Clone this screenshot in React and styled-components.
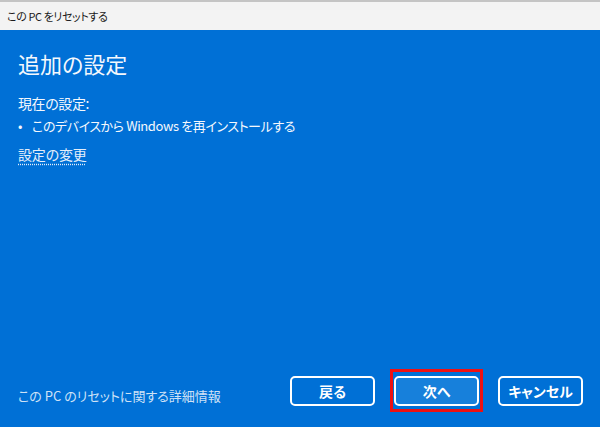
import React from 'react'
import styled, { createGlobalStyle } from 'styled-components'

const GlobalStyle = createGlobalStyle`
  html, body, #root {
    margin: 0;
    height: 100%;
  }
  body {
    font-family: "Noto Sans CJK JP", "Noto Sans", sans-serif;
    font-feature-settings: "palt";
    -webkit-font-smoothing: antialiased;
  }
`

const ResetWindow = () => {
  return (
    <>
      <GlobalStyle />
      <Window>
        <TitleBar>この PC をリセットする</TitleBar>
        <Body>
          <Content>
            <Heading>追加の設定</Heading>
            <SubHeading>現在の設定:</SubHeading>
            <SettingItem>このデバイスから Windows を再インストールする</SettingItem>
            <ChangeLink>設定の変更</ChangeLink>
          </Content>
          <Footer>
            <InfoLink>この PC のリセットに関する詳細情報</InfoLink>
            <Buttons>
              <ActionButton>戻る</ActionButton>
              <ActionButton $primary>次へ</ActionButton>
              <ActionButton>キャンセル</ActionButton>
            </Buttons>
          </Footer>
        </Body>
      </Window>
    </>
  )
}

const Window = styled.div`
  display: flex;
  flex-direction: column;
  width: 600px;
  height: 427px;
  overflow: hidden;
`

const TitleBar = styled.div`
  height: 28px;
  display: flex;
  align-items: center;
  padding: 0 7px;
  border-top: 2px solid #c4c4c4;
  background: #f3f3f3;
  color: #1a1a1a;
  font-size: 11px;
  letter-spacing: -0.4px;
`

const Body = styled.div`
  flex: 1;
  display: flex;
  flex-direction: column;
  justify-content: space-between;
  background: #0070d6;
  color: #f4f8fd;
  padding: 17px 17px 21px 18px;
`

const Content = styled.div`
  display: flex;
  flex-direction: column;
  align-items: flex-start;
`

const Heading = styled.h1`
  margin: 0;
  font-size: 22px;
  font-weight: 400;
  line-height: 32px;
`

const SubHeading = styled.div`
  margin-top: 13px;
  font-size: 14px;
  letter-spacing: -0.4px;
  line-height: 22px;
`

const SettingItem = styled.div`
  margin-top: 1px;
  font-size: 13px;
  letter-spacing: -0.4px;
  line-height: 22px;

  &::before {
    content: '•';
    display: inline-block;
    width: 14px;
  }
`

const ChangeLink = styled.a`
  margin-top: 6px;
  font-size: 14px;
  letter-spacing: -0.2px;
  line-height: 22px;
  color: #e4eefa;
  text-decoration: underline dotted;
  text-underline-offset: 4px;
  cursor: pointer;
`

const Footer = styled.div`
  display: flex;
  justify-content: space-between;
  align-items: center;
`

const InfoLink = styled.a`
  margin-top: 8px;
  font-size: 13px;
  color: #cfe2f6;
  cursor: pointer;
`

const Buttons = styled.div`
  display: flex;
  gap: 19px;
`

const ActionButton = styled.button`
  position: relative;
  width: 85px;
  height: 30px;
  border: 2px solid #ffffff;
  border-radius: 5px;
  background: ${p => (p.$primary ? '#1780db' : '#0070d6')};
  color: #ffffff;
  font-family: inherit;
  font-feature-settings: "palt";
  font-size: 14px;
  font-weight: 700;
  cursor: pointer;

  ${p =>
    p.$primary &&
    `
    &::after {
      content: '';
      position: absolute;
      top: -9px;
      bottom: -8px;
      left: -6px;
      right: -6px;
      border: 3px solid #ee1111;
      pointer-events: none;
    }
  `}
`

export default ResetWindow
